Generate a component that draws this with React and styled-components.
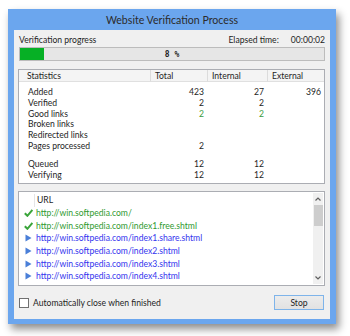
import React from "react";
import styled, { createGlobalStyle } from "styled-components";

const Global = createGlobalStyle`
  html, body { margin: 0; padding: 0; background: #ffffff; }
  body { font-family: Lato, "Noto Sans", sans-serif; }
`;

const Page = styled.div`
  width: 350px;
  height: 336px;
  padding: 9px 0 0 8px;
  box-sizing: border-box;
`;

const Frame = styled.div`
  width: 328px;
  background: #6ba6ee;
  padding: 0 6px 5px 6px;
  box-sizing: border-box;
  box-shadow: 3px 5px 8px rgba(0, 0, 0, 0.45);
  display: flex;
  flex-direction: column;
`;

const TitleBar = styled.div`
  height: 21px;
  display: flex;
  align-items: center;
  justify-content: center;
  font-size: 10.6px;
  color: #2b2b2b;
`;

const Panel = styled.div`
  background: #f0f0f0;
  height: 289px;
  padding: 0 5px 0 4px;
  box-sizing: border-box;
  display: flex;
  flex-direction: column;
  font-size: 8.6px;
  color: #1e1e1e;
`;

const InfoRow = styled.div`
  display: flex;
  align-items: center;
  height: 17px;
  padding: 2px 0 0 1px;
  box-sizing: border-box;
`;

const Spacer = styled.div`
  flex: 1;
`;

const Elapsed = styled.span`
  margin-right: ${(p) => p.$gap || 0}px;
`;

const Progress = styled.div`
  position: relative;
  height: 14px;
  margin-left: 1px;
  border: 1px solid #bcbcbc;
  background: #e6e6e6;
  box-sizing: border-box;
  display: flex;
  align-items: center;
  justify-content: center;
`;

const ProgressFill = styled.div`
  position: absolute;
  left: 0;
  top: 0;
  bottom: 0;
  background: #06b025;
`;

const ProgressText = styled.span`
  position: relative;
  font-family: "DejaVu Sans Mono", monospace;
  font-weight: bold;
  font-size: 8px;
  color: #222;
`;

const ListBox = styled.div`
  position: relative;
  background: #ffffff;
  border: 1px solid #abadb3;
  box-sizing: border-box;
  margin-top: ${(p) => p.$top}px;
  height: ${(p) => p.$h}px;
  overflow: hidden;
`;

const StatGrid = styled.div`
  display: grid;
  grid-template-columns: 132px 57px 60px 1fr;
`;

const HeadCell = styled.div`
  height: 12px;
  line-height: 12px;
  background: #f4f4f4;
  border-bottom: 1px solid #e0e0e0;
  border-right: ${(p) => (p.$last ? "none" : "1px solid #dcdcdc")};
  padding-left: ${(p) => p.$pad}px;
  box-sizing: border-box;
`;

const StatLabel = styled.div`
  height: 10.8px;
  line-height: 10.8px;
  padding-left: 9px;
  margin-top: ${(p) => p.$mt || 0}px;
`;

const StatValue = styled.div`
  height: 10.8px;
  line-height: 10.8px;
  text-align: right;
  padding-right: ${(p) => p.$pr}px;
  color: ${(p) => (p.$green ? "#3b9b3b" : "#1e1e1e")};
  margin-top: ${(p) => p.$mt || 0}px;
`;

const UrlHeader = styled.div`
  display: flex;
  height: 13px;
  margin-top: 2px;
`;

const UrlIconHead = styled.div`
  width: 15px;
  border-right: 1px solid #e5e5e5;
`;

const UrlHeadText = styled.div`
  padding-left: 2px;
  line-height: 13px;
`;

const UrlRow = styled.div`
  display: flex;
  align-items: center;
  height: 12.6px;
`;

const IconCell = styled.div`
  width: 17px;
  display: flex;
  justify-content: center;
  align-items: center;
  padding-left: 2px;
  box-sizing: border-box;
`;

const UrlText = styled.span`
  color: ${(p) => (p.$done ? "#2f9a2f" : "#3434ee")};
  white-space: nowrap;
`;

const Scrollbar = styled.div`
  position: absolute;
  right: 1px;
  top: 1px;
  bottom: 1px;
  width: 10px;
  background: #f0f0f0;
  display: flex;
  flex-direction: column;
  align-items: center;
`;

const ScrollArrow = styled.div`
  height: 12px;
  display: flex;
  align-items: center;
  justify-content: center;
`;

const Thumb = styled.div`
  width: 9px;
  height: 21px;
  background: #cdcdcd;
`;

const Bottom = styled.div`
  display: flex;
  align-items: center;
  margin-top: 9px;
  height: 15px;
`;

const Check = styled.div`
  width: 10px;
  height: 10px;
  box-sizing: border-box;
  border: 1px solid #707070;
  background: #fff;
  margin: 0 4px 0 1px;
`;

const Button = styled.div`
  width: 50px;
  height: 15px;
  box-sizing: border-box;
  border: 1px solid #7eb4ea;
  background: linear-gradient(#ececec, #e2e2e2);
  display: flex;
  align-items: center;
  justify-content: center;
  margin-left: auto;
  margin-right: 1px;
`;

const CheckIcon = () => (
  <svg width="9" height="8" viewBox="0 0 9 8">
    <path d="M0.8 4.2 L3.4 6.8 L8.4 1" stroke="#3aa53a" strokeWidth="2" fill="none" />
  </svg>
);

const PlayIcon = () => (
  <svg width="7" height="8" viewBox="0 0 7 8">
    <path d="M0.5 0.5 L6.5 4 L0.5 7.5 Z" fill="#4a7fd8" />
  </svg>
);

const Arrow = ({ up }) => (
  <svg width="6" height="4" viewBox="0 0 6 4">
    <path d={up ? "M0.5 3.5 L3 1 L5.5 3.5" : "M0.5 0.5 L3 3 L5.5 0.5"} stroke="#606060" strokeWidth="1.2" fill="none" />
  </svg>
);

const stats = [
  ["Added", "423", "27", "396"],
  ["Verified", "2", "2", ""],
  ["Good links", "2", "2", "", true],
  ["Broken links", "", "", ""],
  ["Redirected links", "", "", ""],
  ["Pages processed", "2", "", ""],
  ["Queued", "12", "12", "", false, 7],
  ["Verifying", "12", "12", ""],
];

const urls = [
  ["http://win.softpedia.com/", true],
  ["http://win.softpedia.com/index1.free.shtml", true],
  ["http://win.softpedia.com/index1.share.shtml", false],
  ["http://win.softpedia.com/index2.shtml", false],
  ["http://win.softpedia.com/index3.shtml", false],
  ["http://win.softpedia.com/index4.shtml", false],
];

export default function App() {
  return (
    <>
      <Global />
      <Page>
        <Frame>
          <TitleBar>Website Verification Process</TitleBar>
          <Panel>
            <InfoRow>
              <span>Verification progress</span>
              <Spacer />
              <Elapsed $gap={12}>Elapsed time:</Elapsed>
              <span>00:00:02</span>
            </InfoRow>
            <Progress>
              <ProgressFill style={{ width: "8%" }} />
              <ProgressText>8 %</ProgressText>
            </Progress>
            <ListBox $top={8} $h={115}>
              <StatGrid>
                <HeadCell $pad={8}>Statistics</HeadCell>
                <HeadCell $pad={4}>Total</HeadCell>
                <HeadCell $pad={4}>Internal</HeadCell>
                <HeadCell $pad={4} $last>External</HeadCell>
                {stats.map(([label, t, i, e, green, mt], idx) => {
                  const top = (idx === 0 ? 5 : 0) + (mt || 0);
                  return (
                    <React.Fragment key={label}>
                      <StatLabel $mt={top}>{label}</StatLabel>
                      <StatValue $pr={4} $green={green} $mt={top}>{t}</StatValue>
                      <StatValue $pr={4} $green={green} $mt={top}>{i}</StatValue>
                      <StatValue $pr={3} $green={green} $mt={top}>{e}</StatValue>
                    </React.Fragment>
                  );
                })}
              </StatGrid>
            </ListBox>
            <ListBox $top={7} $h={95}>
              <UrlHeader>
                <UrlIconHead />
                <UrlHeadText>URL</UrlHeadText>
              </UrlHeader>
              {urls.map(([u, done]) => (
                <UrlRow key={u}>
                  <IconCell>{done ? <CheckIcon /> : <PlayIcon />}</IconCell>
                  <UrlText $done={done}>{u}</UrlText>
                </UrlRow>
              ))}
              <Scrollbar>
                <ScrollArrow><Arrow up /></ScrollArrow>
                <Thumb />
                <Spacer />
                <ScrollArrow><Arrow /></ScrollArrow>
              </Scrollbar>
            </ListBox>
            <Bottom>
              <Check />
              <span>Automatically close when finished</span>
              <Button>Stop</Button>
            </Bottom>
          </Panel>
        </Frame>
      </Page>
    </>
  );
}
